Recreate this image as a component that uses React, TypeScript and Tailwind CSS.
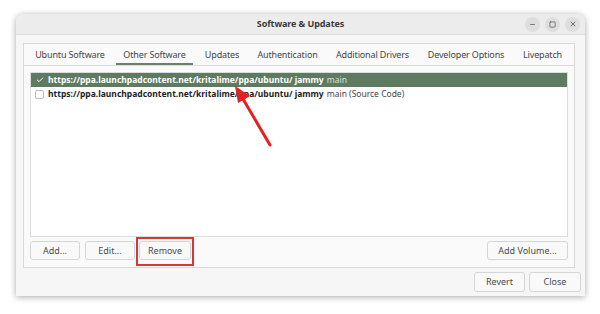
import { Check, Minus, Square, X } from 'lucide-react'

const tabs = [
  { label: 'Ubuntu Software', w: 'w-[82px]' },
  { label: 'Other Software', w: 'w-[77px]' },
  { label: 'Updates', w: 'w-[48px]' },
  { label: 'Authentication', w: 'w-[73px]' },
  { label: 'Additional Drivers', w: 'w-[87px]' },
  { label: 'Developer Options', w: 'w-[90px]' },
  { label: 'Livepatch', w: 'w-[53px]' },
]

const Btn = ({ label, className = '' }: { label: string; className?: string }) => (
  <div
    className={`h-[19px] flex items-center justify-center rounded-[3px] border border-[#d6d6d6] bg-[#f9f9f9] text-[9px] text-[#4a4a4a] whitespace-nowrap ${className}`}
  >
    {label}
  </div>
)

export default function App() {
  return (
    <div
      className="relative w-[600px] h-[314px] bg-white pt-[14px] pl-[16px]"
      style={{ fontFamily: '"Noto Sans", "Open Sans", sans-serif' }}
    >
      <div className="w-[569px] h-[282px] rounded-t-[8px] bg-[#f6f6f6] shadow-[0_1px_6px_rgba(0,0,0,0.35)] flex flex-col overflow-hidden">
        {/* title bar */}
        <div className="h-[21px] shrink-0 grid grid-cols-[1fr_auto_1fr] items-center bg-[#ececec] border-b border-[#dcdcdc]">
          <div />
          <div className="text-[9px] font-bold text-[#3a3a3a] tracking-[-0.1px]">Software &amp; Updates</div>
          <div className="flex justify-end gap-[5px] pr-[5px]">
            <span className="w-[15px] h-[15px] rounded-full bg-[#dedede] flex items-center justify-center">
              <Minus className="w-[7px] h-[7px] text-[#555]" strokeWidth={2.5} />
            </span>
            <span className="w-[15px] h-[15px] rounded-full bg-[#dedede] flex items-center justify-center">
              <Square className="w-[7px] h-[7px] text-[#555]" strokeWidth={2.5} />
            </span>
            <span className="w-[15px] h-[15px] rounded-full bg-[#dedede] flex items-center justify-center">
              <X className="w-[8px] h-[8px] text-[#555]" strokeWidth={2.5} />
            </span>
          </div>
        </div>

        {/* body */}
        <div className="flex-1 flex flex-col px-[7px] pt-[8px]">
          <div className="w-[552px] h-[225px] border border-[#d9d9d9] bg-[#fafafa] flex flex-col">
            <div className="h-[22px] shrink-0 flex gap-[5px] pl-[5px] border-b border-[#dadada]">
              {tabs.map(t => (
                <div
                  key={t.label}
                  className={`${t.w} shrink-0 flex items-center justify-center whitespace-nowrap text-[9px] tracking-[-0.15px] text-[#454545] ${
                    t.label === 'Other Software' ? 'border-b-2 border-[#6d7f6f] pt-[2px]' : ''
                  }`}
                >
                  {t.label}
                </div>
              ))}
            </div>

            <div className="flex-1 flex flex-col px-[6px] pt-[6px] pb-[7px]">
              <div className="h-[165px] border border-[#dcdcdc] bg-white">
                <div className="h-[14px] flex items-center bg-[#5e7a61] pl-[4px] text-[8.5px] text-white whitespace-nowrap">
                  <span className="w-[9px] h-[9px] flex items-center justify-center mr-[4px]">
                    <Check className="w-[8px] h-[8px] text-white" strokeWidth={3} />
                  </span>
                  <span className="font-bold">https://ppa.launchpadcontent.net/kritalime/ppa/ubuntu/ jammy</span>
                  <span className="ml-[3px] text-[#dbe3dc]">main</span>
                </div>
                <div className="h-[14px] flex items-center pl-[4px] text-[8.5px] text-[#1e1e1e] whitespace-nowrap">
                  <span className="w-[9px] h-[9px] rounded-[2px] border border-[#bdbdbd] bg-white mr-[4px]" />
                  <span className="font-bold">https://ppa.launchpadcontent.net/kritalime/ppa/ubuntu/ jammy</span>
                  <span className="ml-[3px] text-[#444]">main (Source Code)</span>
                </div>
              </div>

              <div className="mt-[4px] flex items-center gap-[5px]">
                <Btn label="Add..." className="w-[50px]" />
                <Btn label="Edit..." className="w-[50px]" />
                <div className="relative ml-[-1px]">
                  <Btn label="Remove" className="w-[52px]" />
                  <span className="absolute left-[-3px] right-[-3px] top-[-4px] bottom-[-6px] border-2 border-[#d63838]" />
                </div>
                <div className="flex-1" />
                <Btn label="Add Volume..." className="w-[81px]" />
              </div>
            </div>
          </div>

          <div className="mt-[4px] mr-[-3px] flex justify-end gap-[4px]">
            <Btn label="Revert" className="w-[51px] h-[20px]" />
            <Btn label="Close" className="w-[52px] h-[20px]" />
          </div>
        </div>
      </div>

      {/* annotation arrow */}
      <svg className="absolute left-0 top-0 pointer-events-none" width="600" height="314">
        <line x1="270" y1="145" x2="243" y2="99" stroke="#e3221f" strokeWidth="3" strokeLinecap="round" />
        <polygon points="235,86 250,96 238,103" fill="#e3221f" />
      </svg>
    </div>
  )
}
